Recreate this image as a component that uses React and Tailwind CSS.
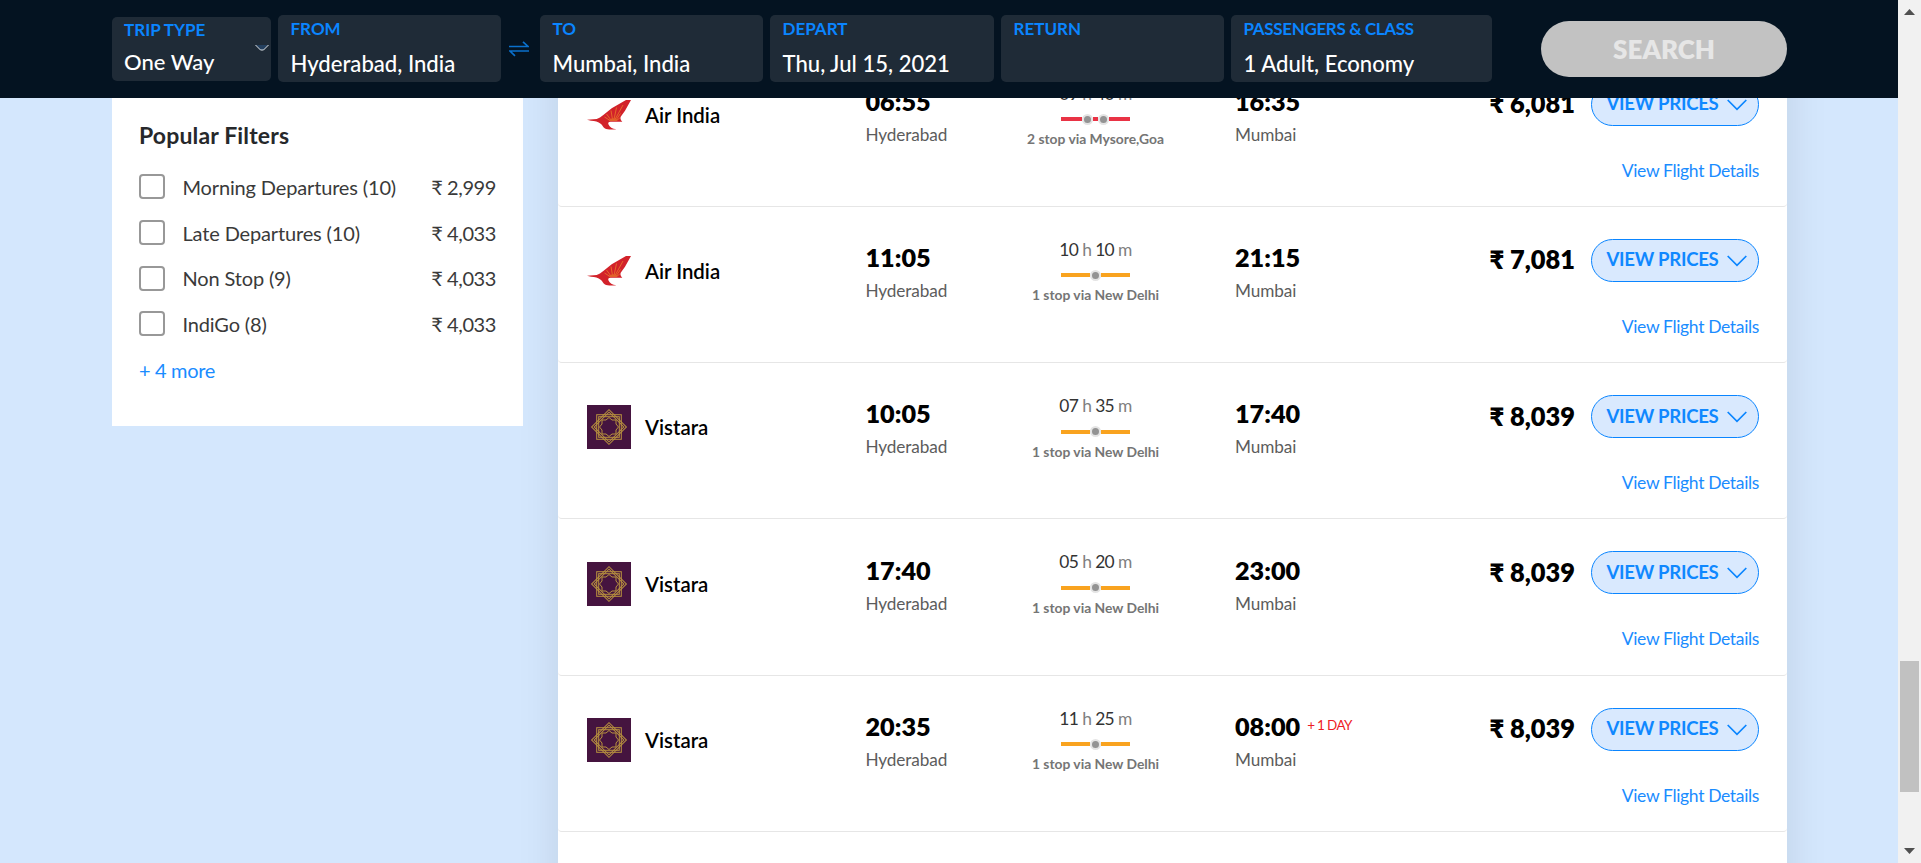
import React from "react";

const SEARCH_FIELDS = {
  from: { label: "FROM", value: "Hyderabad, India" },
  to: { label: "TO", value: "Mumbai, India" },
  depart: { label: "DEPART", value: "Thu, Jul 15, 2021" },
  ret: { label: "RETURN", value: "" },
  pax: { label: "PASSENGERS & CLASS", value: "1 Adult, Economy", tight: true },
};

const FILTERS = [
  { name: "Morning Departures (10)", price: "₹ 2,999" },
  { name: "Late Departures (10)", price: "₹ 4,033" },
  { name: "Non Stop (9)", price: "₹ 4,033" },
  { name: "IndiGo (8)", price: "₹ 4,033" },
];

const FLIGHTS = [
  { airline: "Air India", dep: "06:55", arr: "16:35", h: "09", m: "40", stops: 2, via: "2 stop via Mysore,Goa", price: "₹ 6,081" },
  { airline: "Air India", dep: "11:05", arr: "21:15", h: "10", m: "10", stops: 1, via: "1 stop via New Delhi", price: "₹ 7,081" },
  { airline: "Vistara", dep: "10:05", arr: "17:40", h: "07", m: "35", stops: 1, via: "1 stop via New Delhi", price: "₹ 8,039" },
  { airline: "Vistara", dep: "17:40", arr: "23:00", h: "05", m: "20", stops: 1, via: "1 stop via New Delhi", price: "₹ 8,039" },
  { airline: "Vistara", dep: "20:35", arr: "08:00", h: "11", m: "25", stops: 1, via: "1 stop via New Delhi", price: "₹ 8,039", nextDay: "+ 1 DAY" },
];

function AirIndiaLogo() {
  return (
    <svg className="h-11 w-11 shrink-0" viewBox="0 0 44 44" fill="none">
      <path
        d="M39 7L24.700 15.300L16.300 22C14 24 12 25.300 9.700 25.900L0 26.700L4 27.800C8 28 11 28.800 14 31C15.500 32.300 16 34.300 18 35.500C20 36.700 25 36.900 29.500 36.200C25 35.800 22.800 34 21.500 31.500C20.800 29.800 21.500 28.900 23.500 28.800L35.300 28.700C33.700 27 33 25.500 33.700 23.700L38 17.700L44 7Z"
        fill="#d2222a"
      />
      <path
        d="M23 27.500L17.500 24M24 27L19.500 21M25.500 26.500L24 17.500M27 26.500L29.500 14.500M28 26.500L36 12M29 27L33.500 20.500M29.500 27.500L32.800 25"
        stroke="#e8702a"
        strokeWidth="0.900"
      />
      <path d="M21.500 28C23.500 24.500 28 24 30.500 28Z" fill="#e2622a" />
    </svg>
  );
}

function VistaraLogo() {
  return (
    <svg className="h-11 w-11 shrink-0" viewBox="0 0 44 44" fill="none">
      <rect width="44" height="44" fill="#45143f" />
      <g stroke="#b8923f" strokeWidth="1">
        <rect x="9.700" y="9.700" width="24.600" height="24.600" />
        <rect x="11.700" y="11.700" width="20.600" height="20.600" />
        <g transform="rotate(45 22 22)">
          <rect x="9.700" y="9.700" width="24.600" height="24.600" />
          <rect x="11.500" y="11.500" width="21" height="21" />
        </g>
        <path d="M22 12.500L25 15H29V19L31.500 22L29 25V29H25L22 31.500L19 29H15V25L12.500 22L15 19V15H19Z" />
      </g>
    </svg>
  );
}

function SearchBox({ label, value, tight, className }) {
  return (
    <div className={"mt-[15px] h-[67px] shrink-0 rounded-[5px] bg-[#1f2b37] pt-[4px] pl-[12.500px] " + className}>
      <div className={"text-[17px] leading-[20px] font-bold whitespace-nowrap text-[#0a85ff] " + (tight ? "tracking-[-0.350px]" : "")}>{label}</div>
      <div className="mt-[12px] text-[22.100px] leading-[26px] font-medium whitespace-nowrap text-white">{value}</div>
    </div>
  );
}

function Header() {
  return (
    <header className="relative z-10 flex h-[98px] w-[1898px] shrink-0 bg-[#041321] pl-[112px]">
      <div className="mt-[17px] flex h-[64px] w-[159px] shrink-0 rounded-[5px] bg-[#1f2b37] pt-[3px] pl-[12px]">
        <div className="w-[131px] shrink-0">
          <div className="text-[17px] leading-[20px] font-bold text-[#0a85ff]">TRIP TYPE</div>
          <div className="mt-[9px] text-[22px] leading-[26px] font-medium text-white">One Way</div>
        </div>
        <svg className="mt-[24px] h-[8px] w-[14px] shrink-0" viewBox="0 0 14 8" fill="none">
          <path d="M1 1L5.500 6H8.500L13 1Z" fill="#24405f" />
          <path d="M0.500 1L5.500 6H8.500L13.500 1" stroke="#dfe5ea" strokeWidth="1" />
        </svg>
      </div>
      <SearchBox {...SEARCH_FIELDS.from} className="ml-[7px] w-[223px]" />
      <svg className="mt-[41px] ml-[8px] h-[16px] w-[20px] shrink-0" viewBox="0 0 20 16" fill="none">
        <path d="M0 5.500H19L14 0.800M20 10H1L6 14.800" stroke="#0a70cc" strokeWidth="1.700" />
      </svg>
      <SearchBox {...SEARCH_FIELDS.to} className="ml-[11px] w-[223px]" />
      <SearchBox {...SEARCH_FIELDS.depart} className="ml-[7px] w-[224px]" />
      <SearchBox {...SEARCH_FIELDS.ret} className="ml-[7px] w-[223px]" />
      <SearchBox {...SEARCH_FIELDS.pax} className="ml-[7px] w-[261px]" />
      <button className="mt-[21px] ml-[49px] h-[56px] w-[246px] shrink-0 rounded-full bg-[#c2c2c2] text-[26px] leading-[56px] font-extrabold text-[#e6e6e6]">
        SEARCH
      </button>
    </header>
  );
}

function Filters() {
  return (
    <aside className="h-[376px] w-[411px] shrink-0 bg-white pt-[71px] pr-[27px] pl-[27px]">
      <h2 className="text-[23px] leading-[28px] font-bold tracking-[0.150px] text-[#26282b]">Popular Filters</h2>
      <ul className="mt-[15px]">
        {FILTERS.map((f) => (
          <li key={f.name} className="flex h-[45.700px] items-center">
            <span className="h-[25px] w-[26px] shrink-0 rounded-[4px] border-2 border-[#989898]" />
            <span className="ml-[17.500px] text-[20px] leading-[26px] tracking-[-0.150px] whitespace-nowrap text-[#3a3a3a]">{f.name}</span>
            <span className="ml-auto text-[20px] leading-[26px] tracking-[-0.400px] whitespace-nowrap text-[#3a3a3a]">{f.price}</span>
          </li>
        ))}
      </ul>
      <a className="mt-[10px] block text-[20px] leading-[26px] tracking-[-0.350px] text-[#1a8cff]">+ 4 more</a>
    </aside>
  );
}

function StopDot() {
  return <span className="h-[11px] w-[11px] rounded-full border-2 border-[#e4e4e4] bg-[#939393]" />;
}

function StopLine({ stops }) {
  if (stops === 2) {
    return (
      <div className="mt-[10px] flex h-[11px] w-[69px] items-center">
        <span className="h-[4px] w-[21px] bg-[#e93345]" />
        <StopDot />
        <span className="h-[4px] w-[5px] bg-[#e93345]" />
        <StopDot />
        <span className="h-[4px] w-[21px] bg-[#e93345]" />
      </div>
    );
  }
  return (
    <div className="mt-[10px] flex h-[11px] w-[69px] items-center">
      <span className="h-[4px] w-[29px] bg-[#f9a31f]" />
      <StopDot />
      <span className="h-[4px] w-[29px] bg-[#f9a31f]" />
    </div>
  );
}

function FlightRow({ flight }) {
  return (
    <article className="flex h-[156.250px] shrink-0 rounded-b-[4px] border-b border-[#e6e6e6]">
      <div className="mt-[42.300px] flex h-[44px] w-[307.500px] shrink-0 items-center pl-[29px]">
        {flight.airline === "Vistara" ? <VistaraLogo /> : <AirIndiaLogo />}
        <span className="ml-[14px] text-[20.400px] leading-[26px] font-semibold text-black">{flight.airline}</span>
      </div>
      <div className="w-[149.500px] shrink-0 pt-[35.400px]">
        <div className="text-[25.200px] leading-[30px] font-extrabold text-black">{flight.dep}</div>
        <div className="mt-[7px] text-[17.200px] leading-[24px] tracking-[-0.100px] text-[#5c5c5c]">Hyderabad</div>
      </div>
      <div className="flex w-[161px] shrink-0 flex-col items-center pt-[33px]">
        <div className="text-[17.400px] leading-[20px] tracking-[-0.600px] whitespace-nowrap text-[#808080]">
          <span className="text-[#333]">{flight.h}</span> h <span className="text-[#333]">{flight.m}</span> m
        </div>
        <StopLine stops={flight.stops} />
        <div className="mt-[5.500px] text-[13.850px] leading-[18px] font-bold whitespace-nowrap text-[#757575]">{flight.via}</div>
      </div>
      <div className="shrink-0 pt-[35.400px] pl-[59px]">
        <div className="flex">
          <span className="text-[25.200px] leading-[30px] font-extrabold text-black">{flight.arr}</span>
          {flight.nextDay && (
            <span className="ml-[7px] text-[13.500px] leading-[28px] tracking-[-0.650px] text-[#ee1c25]">{flight.nextDay}</span>
          )}
        </div>
        <div className="mt-[7px] text-[17.200px] leading-[24px] tracking-[-0.100px] text-[#5c5c5c]">Mumbai</div>
      </div>
      <div className="ml-auto shrink-0 pt-[32px] pr-[28px]">
        <div className="flex items-center">
          <span className="mb-[2px] text-[25.400px] leading-[30px] font-extrabold text-black">{flight.price}</span>
          <button className="ml-[16px] flex h-[43px] w-[168px] items-center rounded-full border border-[#0a85ff] bg-[#d9e9fe] pl-[14.500px] text-[18.600px] font-bold tracking-[-0.300px] whitespace-nowrap text-[#1088ff]">
            VIEW PRICES
            <svg className="mt-[1px] ml-[8.500px] h-[12px] w-[20px]" viewBox="0 0 20 12" fill="none">
              <path d="M0.700 1L10 10.300L19.300 1" stroke="#0a85ff" strokeWidth="1.700" />
            </svg>
          </button>
        </div>
        <div className="mt-[33px] text-right text-[17.500px] leading-[24px] tracking-[-0.350px] text-[#1a8cff]">View Flight Details</div>
      </div>
    </article>
  );
}

function Scrollbar() {
  return (
    <div className="flex h-[863px] w-[23px] shrink-0 flex-col items-center bg-[#f1f1f1]">
      <svg className="mt-[9px] h-[6px] w-[11px] shrink-0" viewBox="0 0 11 6">
        <path d="M5.500 0L11 6H0Z" fill="#505050" />
      </svg>
      <div className="mt-[646px] h-[131px] w-[19px] shrink-0 bg-[#c1c1c1]" />
      <svg className="mt-[56px] h-[6px] w-[11px] shrink-0" viewBox="0 0 11 6">
        <path d="M5.500 6L11 0H0Z" fill="#505050" />
      </svg>
    </div>
  );
}

export default function App() {
  return (
    <div className="flex h-[863px] w-[1921px] overflow-hidden bg-[#d4e7fd] font-['Lato',sans-serif]">
      <div className="flex h-[863px] w-[1898px] shrink-0 flex-col overflow-hidden">
        <Header />
        <main className="mt-[-48px] flex shrink-0 pl-[112px]">
          <Filters />
          <section className="mt-[0.500px] ml-[35px] flex h-[900px] w-[1229px] shrink-0 flex-col bg-white shadow-[0_0_40px_rgba(0,0,0,0.1)]">
            {FLIGHTS.map((f) => (
              <FlightRow key={f.airline + f.dep} flight={f} />
            ))}
          </section>
        </main>
      </div>
      <Scrollbar />
    </div>
  );
}
